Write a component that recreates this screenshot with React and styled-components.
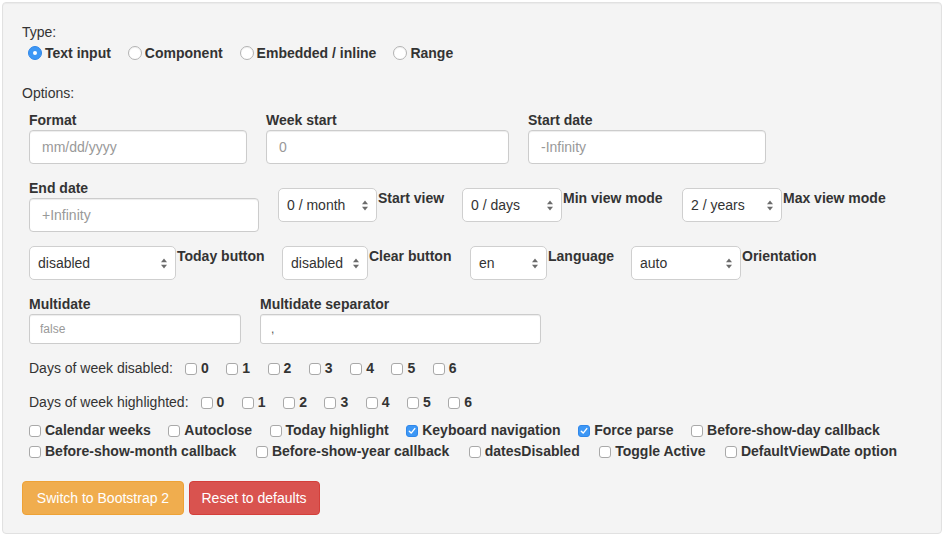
import React from 'react';
import styled, { createGlobalStyle } from 'styled-components';

const GlobalStyle = createGlobalStyle`
  * { box-sizing: border-box; }
  html, body { padding: 0; background: #fff; }
  body {
    margin: 2px;
    font-family: "Liberation Sans", Arial, Helvetica, sans-serif;
    font-size: 14px;
    line-height: 20px;
    color: #333;
  }
`;

const Well = styled.div`
  width: 940px;
  background: #f4f4f4;
  border: 1px solid #e1e1e1;
  border-radius: 4px;
  box-shadow: inset 0 1px 1px rgba(0, 0, 0, 0.04);
  padding: 19px 19px 18px 19px;
`;

const Caption = styled.div`
  line-height: 20px;
  margin-top: ${(p) => p.$mt || 0}px;
`;

const RadioRow = styled.div`
  display: flex;
  align-items: center;
  gap: 17px;
  height: 20px;
  margin-top: 1px;
  padding-left: 6px;
`;

const Choice = styled.label`
  display: flex;
  align-items: center;
  gap: ${(p) => p.$gap || 4}px;
  font-weight: 700;
  white-space: nowrap;
  line-height: 20px;
`;

const RadioDot = styled.span`
  width: 14px;
  height: 14px;
  border-radius: 50%;
  flex: none;
  border: 1px solid ${(p) => (p.$on ? '#2f87ea' : '#b3b3b3')};
  background: ${(p) => (p.$on ? '#3d97f5' : '#fff')};
  display: flex;
  align-items: center;
  justify-content: center;
  box-shadow: ${(p) => (p.$on ? 'none' : 'inset 0 1px 1px rgba(0,0,0,0.06)')};
  &::after {
    content: '';
    display: ${(p) => (p.$on ? 'block' : 'none')};
    width: 4px;
    height: 4px;
    border-radius: 50%;
    background: #fff;
  }
`;

const Box = styled.span`
  width: 12px;
  height: 12px;
  flex: none;
  border-radius: 3px;
  margin-top: 2px;
  border: 1px solid ${(p) => (p.$on ? '#2f87ea' : '#a9a9a9')};
  background: ${(p) => (p.$on ? '#3d97f5' : '#fff')};
  display: flex;
  align-items: center;
  justify-content: center;
`;

const Row = styled.div`
  display: flex;
  align-items: flex-start;
  gap: 19px;
  padding-left: 7px;
  margin-top: ${(p) => p.$mt || 0}px;
`;

const Field = styled.div`
  display: flex;
  flex-direction: column;
`;

const Label = styled.label`
  font-weight: 700;
  line-height: 20px;
  white-space: nowrap;
`;

const Input = styled.input`
  width: ${(p) => p.$w}px;
  height: ${(p) => (p.$sm ? 30 : 34)}px;
  padding: ${(p) => (p.$sm ? '5px 10px' : '6px 12px')};
  font-family: inherit;
  font-size: ${(p) => (p.$sm ? 12 : 14)}px;
  color: #555;
  background: #fff;
  border: 1px solid #ccc;
  border-radius: ${(p) => (p.$sm ? 3 : 4)}px;
  box-shadow: inset 0 1px 1px rgba(0, 0, 0, 0.075);
  outline: none;
  &::placeholder {
    color: #999;
  }
`;

const SelectGroup = styled.div`
  display: flex;
  align-items: flex-start;
  margin-top: ${(p) => p.$mt || 0}px;
`;

const Select = styled.div`
  width: ${(p) => p.$w}px;
  height: 34px;
  display: flex;
  align-items: center;
  justify-content: space-between;
  padding: 0 8px 0 8px;
  background: #fff;
  border: 1px solid #cfcfcf;
  border-radius: 5px;
  color: #333;
  font-size: 14px;
  white-space: nowrap;
`;

const SideLabel = styled(Label)`
  margin-left: 1px;
  width: ${(p) => (p.$w ? `${p.$w}px` : 'auto')};
`;

const DaysRow = styled.div`
  display: flex;
  align-items: center;
  padding-left: 7px;
  height: 20px;
  margin-top: ${(p) => p.$mt || 0}px;
`;

const DaysCaption = styled.span`
  margin-right: 12px;
  white-space: nowrap;
`;

const DayList = styled.div`
  display: flex;
  gap: 17.5px;
`;

const FlagRow = styled.div`
  display: flex;
  align-items: center;
  gap: ${(p) => p.$gap}px;
  padding-left: 7px;
  height: 20px;
  margin-top: ${(p) => p.$mt || 0}px;
`;

const Buttons = styled.div`
  display: flex;
  gap: 4.5px;
  margin-top: 20px;
`;

const Btn = styled.button`
  height: 34px;
  padding: 6px 12px;
  font-family: inherit;
  font-size: 14px;
  line-height: 20px;
  color: #fff;
  border-radius: 4px;
  border: 1px solid ${(p) => (p.$kind === 'warning' ? '#eea236' : '#d43f3a')};
  background: ${(p) => (p.$kind === 'warning' ? '#f0ad4e' : '#d9534f')};
  cursor: pointer;
  min-width: ${(p) => (p.$kind === 'warning' ? '162px' : '0')};
`;

const Arrows = () => (
  <svg width="6" height="11" viewBox="0 0 6 11">
    <path d="M0 4.2 L3 0.5 L6 4.2 Z" fill="#6b6b6b" />
    <path d="M0 6.8 L3 10.5 L6 6.8 Z" fill="#6b6b6b" />
  </svg>
);

const Check = () => (
  <svg width="8" height="8" viewBox="0 0 8 8">
    <path d="M1.3 4.2 L3.2 6.1 L6.8 1.6" fill="none" stroke="#fff" strokeWidth="1.4" strokeLinecap="round" strokeLinejoin="round" />
  </svg>
);

const Radio = ({ on, children }) => (
  <Choice $gap={3}>
    <RadioDot $on={on} />
    {children}
  </Choice>
);

const CheckItem = ({ on, children }) => (
  <Choice $gap={4}>
    <Box $on={on}>{on && <Check />}</Box>
    {children}
  </Choice>
);

const SelectField = ({ w, value, label, labelW, mt }) => (
  <SelectGroup $mt={mt}>
    <Select $w={w}>
      <span>{value}</span>
      <Arrows />
    </Select>
    <SideLabel $w={labelW}>{label}</SideLabel>
  </SelectGroup>
);

const days = ['0', '1', '2', '3', '4', '5', '6'];

export default function App() {
  return (
    <>
      <GlobalStyle />
      <Well>
        <Caption>Type:</Caption>
        <RadioRow>
          <Radio on>Text input</Radio>
          <Radio>Component</Radio>
          <Radio>Embedded / inline</Radio>
          <Radio>Range</Radio>
        </RadioRow>

        <Caption $mt={20}>Options:</Caption>

        <Row $mt={7}>
          <Field>
            <Label>Format</Label>
            <Input $w={218} placeholder="mm/dd/yyyy" readOnly />
          </Field>
          <Field>
            <Label>Week start</Label>
            <Input $w={243} placeholder="0" readOnly />
          </Field>
          <Field>
            <Label>Start date</Label>
            <Input $w={238} placeholder="-Infinity" readOnly />
          </Field>
        </Row>

        <Row $mt={14}>
          <Field>
            <Label>End date</Label>
            <Input $w={230} placeholder="+Infinity" readOnly />
          </Field>
          <SelectField mt={10} w={99} value="0 / month" label="Start view" labelW={65} />
          <SelectField mt={10} w={100} value="0 / days" label="Min view mode" labelW={100} />
          <SelectField mt={10} w={100} value="2 / years" label="Max view mode" />
        </Row>

        <Row $mt={14}>
          <SelectField w={147} value="disabled" label="Today button" labelW={86} />
          <SelectField w={86} value="disabled" label="Clear button" labelW={82} />
          <SelectField w={77} value="en" label="Language" labelW={64} />
          <SelectField w={110} value="auto" label="Orientation" />
        </Row>

        <Row $mt={14}>
          <Field>
            <Label>Multidate</Label>
            <Input $sm $w={212} placeholder="false" readOnly />
          </Field>
          <Field>
            <Label>Multidate separator</Label>
            <Input $sm $w={281} defaultValue="," readOnly />
          </Field>
        </Row>

        <DaysRow $mt={14}>
          <DaysCaption>Days of week disabled:</DaysCaption>
          <DayList>
            {days.map((d) => (
              <CheckItem key={d}>{d}</CheckItem>
            ))}
          </DayList>
        </DaysRow>

        <DaysRow $mt={14}>
          <DaysCaption>Days of week highlighted:</DaysCaption>
          <DayList>
            {days.map((d) => (
              <CheckItem key={d}>{d}</CheckItem>
            ))}
          </DayList>
        </DaysRow>

        <FlagRow $mt={8} $gap={17.5}>
          <CheckItem>Calendar weeks</CheckItem>
          <CheckItem>Autoclose</CheckItem>
          <CheckItem>Today highlight</CheckItem>
          <CheckItem on>Keyboard navigation</CheckItem>
          <CheckItem on>Force parse</CheckItem>
          <CheckItem>Before-show-day callback</CheckItem>
        </FlagRow>
        <FlagRow $mt={1} $gap={19.5}>
          <CheckItem>Before-show-month callback</CheckItem>
          <CheckItem>Before-show-year callback</CheckItem>
          <CheckItem>datesDisabled</CheckItem>
          <CheckItem>Toggle Active</CheckItem>
          <CheckItem>DefaultViewDate option</CheckItem>
        </FlagRow>

        <Buttons>
          <Btn $kind="warning">Switch to Bootstrap 2</Btn>
          <Btn $kind="danger">Reset to defaults</Btn>
        </Buttons>
      </Well>
    </>
  );
}
